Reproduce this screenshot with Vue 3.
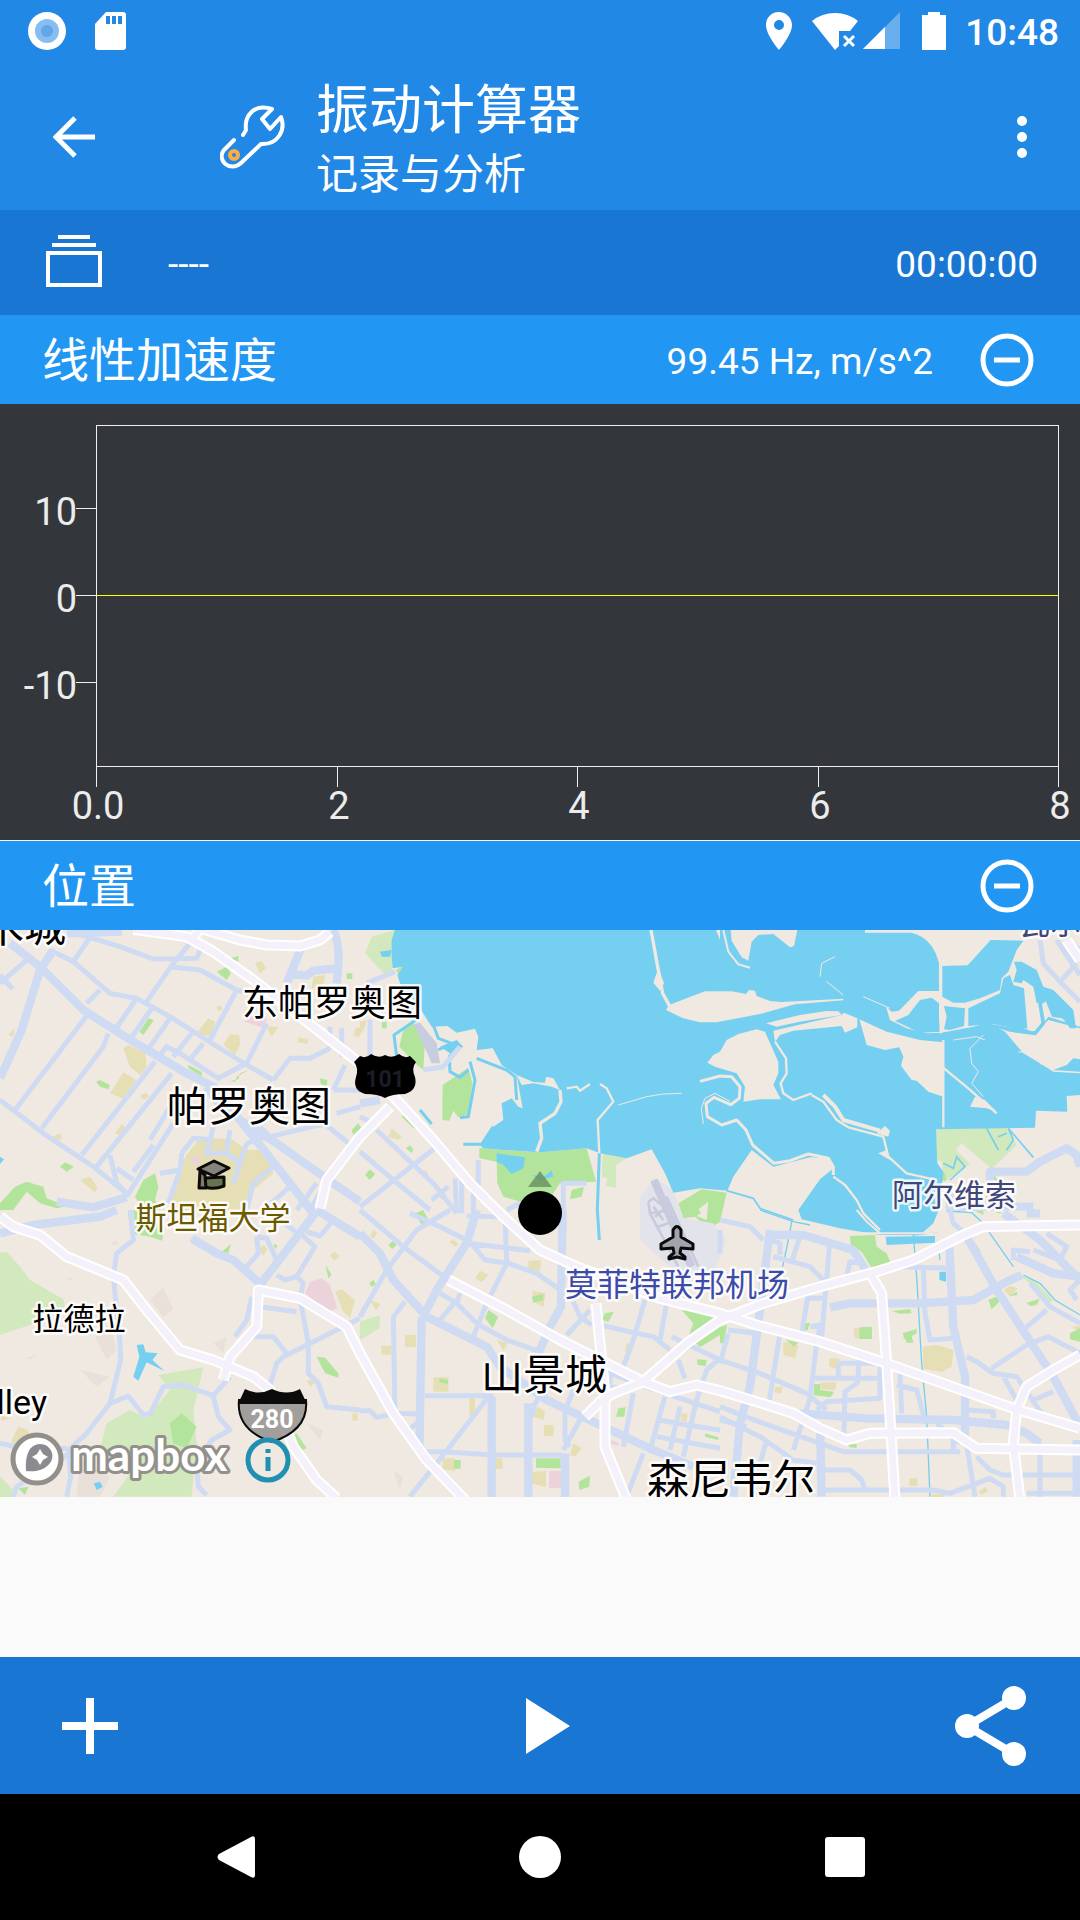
<script setup>
import { ref } from 'vue'

const experiment = ref('----')
const elapsed = ref('00:00:00')

const yTicks = [
  { y: 104, label: '10' },
  { y: 191, label: '0' },
  { y: 278, label: '-10' }
]
const xTicks = [
  { x: 96, label: '0.0' },
  { x: 337, label: '2' },
  { x: 577, label: '4' },
  { x: 818, label: '6' },
  { x: 1058, label: '8' }
]

const places = [
  { name: '东帕罗奥图', x: 332, y: 86, size: 36, kind: 'town' },
  { name: '帕罗奥图', x: 249, y: 191, size: 41, kind: 'town' },
  { name: '斯坦福大学', x: 213, y: 299, size: 31, kind: 'campus' },
  { name: '拉德拉', x: 79, y: 400, size: 31, kind: 'town' },
  { name: '山景城', x: 544, y: 460, size: 42, kind: 'town' },
  { name: '森尼韦尔', x: 731, y: 565, size: 42, kind: 'town' },
  { name: '莫菲特联邦机场', x: 677, y: 366, size: 32, kind: 'airport' },
  { name: '阿尔维索', x: 954, y: 276, size: 31, kind: 'suburb' }
]

// Map geometry uses three units per pixel, split in six tiles.
const tiles = [
  {
    at: 'translate(0 0)',
    sand: 'M515 850L535 740L600 650L700 660L740 690L800 690L820 760L760 810L740 880H520ZM370 385L385 375L435 400L440 440L420 465L390 440ZM330 520L370 457L410 480L370 537ZM590 340L625 295L645 305L635 350ZM670 375L690 342L718 345L720 375L705 405ZM765 130L785 122L798 145L780 160ZM940 170L975 165L970 200L935 205ZM800 320L835 320L815 350ZM895 352L925 358L922 372L893 366ZM240 780L270 770L292 800L285 818ZM345 640L365 612L378 625L355 645ZM160 650L180 640L187 655L170 662ZM420 528L435 518L447 528L432 540ZM650 262L660 255L668 268L655 274ZM1065 325L1080 322V350L1062 348ZM25 345L45 325L40 350Z',
    green: 'M650 155L680 140L693 160L680 180ZM690 115L715 108L715 125ZM418 335L445 295L462 300L430 345ZM288 485L300 480L330 495L325 508L300 500ZM180 740L195 727L222 740L200 755ZM0 850L45 800L80 785L130 800L140 835L200 858L170 865L120 850L80 815L40 870H0ZM405 830L430 780L465 760L475 800L465 840L480 870H430ZM565 435L605 455V470L565 445ZM1055 630L1075 610L1085 625L1060 645ZM1040 160H1057V177H1040ZM960 475L982 480L980 500L962 492ZM690 483L715 478L720 460L745 450L710 470L705 485ZM785 85L880 88L870 94L785 90Z',
    pink: 'M740 290L790 275L800 300L785 322L735 305ZM575 715L600 708L600 730L575 735Z',
    minor: 'M230 40L360 80L460 117L590 115L600 90M570 70L520 130L440 245M510 140L600 150L710 210L630 360M150 90L220 125L330 220L410 235L510 290L620 360L740 435L820 480M220 125L275 45M260 250L300 210M410 235L345 330M455 265L395 352M510 295L445 387M262 285L45 570M325 340L310 380L125 625M465 425L245 705M515 460L290 740M0 540L130 640L280 740L385 825M800 310L740 430L655 475L540 400L500 380L480 405M610 370L565 425M575 340L520 410M820 480L870 415L930 415L990 385M0 190L80 120M0 165L38 207M520 545L450 660M460 675L400 755M330 705L350 790L380 820M350 745L400 780M520 610L380 830M710 210L730 215M990 320V385M1025 325V410M780 620L810 650L980 610M960 600L1065 685M1000 510H1080M1000 510L1035 435M1010 580L1080 560M545 700L580 655L640 660M640 620L620 700L680 700L720 730M690 630L680 690M545 700L540 750L480 760M540 750L505 850M740 670L700 790M740 670L800 650M820 740L760 790L740 870M790 870L870 800M890 870L950 790M930 870L970 800',
    major: 'M30 70L120 140L250 270L400 365L560 460L640 500L720 600L870 790L940 880M160 90L120 150L65 330L0 475M1000 30Q1025 80 1010 190M905 80L860 190M870 162L920 167L940 152L1010 145M170 845L280 862L380 832M720 600L830 670L1000 790L1080 845M200 40L365 35M620 500L690 600'
  },
  {
    at: 'translate(1080 0)',
    sand: 'M0 305L20 300L15 320L0 345ZM85 650L95 625L125 650L115 660ZM185 760L197 750L205 762L193 770Z',
    green: 'M130 330L160 312L195 360L190 450L165 430L118 380ZM248 495L325 443L337 490L325 583L295 592L280 572L268 602L247 600ZM125 590L140 580L180 625L160 625ZM138 685L150 676L160 688L155 700ZM15 765L30 748L45 762L30 780ZM240 828L255 820L260 830L245 838ZM107 150L130 138L130 150L115 162ZM66 305H80V325H66ZM358 683L420 690L540 697L680 685L708 785L600 790L560 850L480 845L430 830L412 790L410 725L358 715ZM635 810L672 800L665 830L630 838ZM955 850L1025 808L1100 818L1080 905L1047 927L1005 890L970 895Z',
    pale: 'M35 50L105 30L95 160L70 160L15 100ZM728 700L800 715L768 735V803L738 798L742 775L725 770Z',
    minor: 'M30 300V410M20 190L105 155M190 450L250 440L300 380M50 630L220 790L290 880M0 695L100 780L210 870M230 680L0 860M0 590L30 605M355 720V800M285 775L290 880M305 770V880M340 780V880M610 880V790H680M265 800L215 840M440 870L480 850',
    major: 'M0 550L60 540'
  },
  {
    at: 'translate(2160 0)',
    green: 'M620 770L650 752L672 755L680 782L650 782ZM822 765L838 785H822ZM820 870L850 880H835Z',
    pale: 'M646 628L860 622L890 675L815 747L725 670L708 690L750 732L672 785L665 722L652 722Z',
    sand: 'M790 835L805 825V845H790Z',
    minor: 'M960 60L970 130L1020 185L1080 245M1010 60L1080 165M1020 185L1070 130M1040 60L1080 90',
    major: 'M810 800V755L920 755L960 725L1040 685L1070 705L1080 740M690 860H940M690 870L690 820'
  },
  {
    at: 'translate(0 870)',
    pale: 'M0 128L20 125L60 170L90 210L190 268L195 290L90 345L0 375ZM475 495L610 472L580 600L590 700L575 860H340L390 790L300 720L320 640L390 600L440 625L510 540ZM0 800L40 840V862H0Z',
    green: 'M400 0H420L490 50L487 92L450 80L405 72ZM510 640L545 610L590 650L560 715L520 700ZM665 125L693 102L685 130ZM820 100L833 108L825 118ZM977 165L995 195L985 205ZM950 440L975 443L1015 490L1015 503L975 490ZM870 685L890 670L920 715L900 722ZM55 835L85 830L75 855Z',
    pink: 'M915 250L930 215L965 205L990 225L1012 295L985 305Z',
    sand: 'M778 115L790 105L803 118L790 138ZM990 135L1003 125L1018 138L1003 152ZM1005 245L1025 238L1065 270L1050 325L1030 305ZM920 510L935 510L943 520L930 530ZM1057 610H1073V632H1057ZM35 690L55 650L85 660L90 690L60 720L38 715ZM0 615L30 625L5 632Z',
    minor: 'M390 0L400 90L350 130L340 200L360 400L362 450L330 580L260 670L205 720L212 800L200 860M330 580L385 558L430 615L450 612L490 530L550 525L640 557L690 500M640 560L655 620L690 660L635 690L590 760L595 830L620 855M0 700L100 720L200 715M210 730L50 830L40 860M770 80L775 130L740 170M770 80L800 85L830 150M705 380L740 330L755 260M780 290L890 305M900 265L925 400L925 490L955 520L980 590L1080 600M1080 325L940 395L850 440L830 460L810 525M760 380L820 380L860 430M1000 30L960 78L920 65M900 70L945 110L890 200L855 210L830 195M890 200L910 220L900 265M840 30L900 75',
    major: 'M0 70L100 45L300 20L350 0M575 85L650 130L700 150L785 225M945 10L780 225M950 0L1080 80'
  },
  {
    at: 'translate(1080 870)',
    pale: 'M0 335L60 315L58 355L0 390Z',
    green: 'M165 10L190 0L210 40L190 55ZM85 105L98 93L110 105L97 117ZM28 220L40 210L48 222L35 230ZM375 325L385 300L415 320L398 355ZM515 260L550 252L550 270L520 278ZM735 310L762 305L745 335L725 330ZM528 745H602V775L528 773ZM282 750H302V776H282ZM656 815L690 797L688 830L658 840ZM775 595L797 592L793 620L768 620ZM1012 448L1040 450L1037 468L1012 464ZM1035 670L1075 682V690L1035 680ZM965 300L1080 320V375L1020 412L985 380L1000 340ZM238 505L264 510V522L238 517Z',
    sand: 'M135 375H168V411H135ZM64 407H94V434H64ZM220 502H265V545H220ZM505 152L543 150L540 184L505 180ZM345 205L360 182L385 195L365 217ZM518 243L557 250L550 290L520 275ZM410 390L443 400L430 422ZM552 645H581V678H552ZM520 620L535 590L555 605L550 630ZM630 735L640 700L665 715L645 740ZM515 785L558 783V832L515 820ZM248 745H285V782L248 778ZM405 745H428V777H405ZM328 565H345V615H328ZM30 270L62 282L48 300ZM795 425L800 400L812 402L807 427ZM962 610L983 612L980 635L962 632ZM30 80L40 60L52 68L42 85ZM268 95L280 88L295 103L285 110Z',
    pink: 'M567 783H603V834H567ZM755 690L778 700L772 708L752 700Z',
    minor: 'M0 0L130 110L265 210M270 0L170 60L80 180L0 320M150 10L240 50L330 95L375 150L445 160L530 190L595 235M320 100L510 122M320 18L420 20M435 20L440 160L380 280L340 380M240 250L290 280L300 250M280 270L350 340L440 390L540 425M290 270L240 330M135 275L100 320L105 610L170 612M105 610L50 622L30 602L0 602M195 557H400M385 560L250 735L150 860M190 725L250 725L400 735H605M525 590L505 640M615 590V690L630 710M665 620L610 720M640 275L660 320L695 345M690 300L620 375M720 345L830 370L880 380L930 420M855 270L820 390L790 470M920 280L900 390M935 380L1080 450M955 450L975 505M1080 445L1040 480L1010 570L970 740M915 560L870 720M960 590L930 720M900 630L980 645L1080 660M890 680L1080 715M750 490L900 545L1080 605M820 550L790 710M850 730L800 860M170 640L140 665M750 480L750 530L790 535M560 520L520 590M640 540L620 590',
    major: 'M0 70L60 130L100 210L200 320L380 410L420 470L560 570L720 645L880 720L1000 770M350 0L320 100L230 240L195 310M185 320L178 730M395 560V862M505 580V862M615 730V862M608 0L603 290L570 350L535 430'
  },
  {
    at: 'translate(2160 870)',
    green: 'M390 78L465 75L470 110L500 130L512 158L455 175L425 125L392 105ZM0 350L22 345L10 400H0ZM418 352L456 350V387H418ZM548 370L590 357V370L575 378L580 398L560 398ZM515 303L570 297L575 310L540 311ZM255 340L270 338L262 362L254 360ZM195 388L235 398L222 410ZM282 522L300 522L300 540L342 545L332 562L282 556ZM380 702H410V714L390 712ZM763 95L785 128L770 115ZM805 270L835 257L838 275L815 298ZM920 278L960 266L950 285L930 288ZM868 258L890 245L893 255ZM1050 370L1080 355V395L1050 388ZM760 0H790V15Z',
    pale: 'M900 195L940 210L1000 270L985 280L940 230Z',
    sand: 'M608 410L650 404L700 420L695 470L665 486L610 476ZM190 395L235 405L225 445L190 435ZM328 445H357V480L328 470ZM400 355H420V385H405ZM300 518L350 515L345 540L302 538ZM165 530L188 530L183 552L163 545ZM568 805H592V828H568ZM775 845L795 832L805 842L785 855ZM852 240L870 228L893 235L870 260ZM550 368L570 372L560 390L550 385ZM1055 350L1080 348V365ZM635 852H680L670 862H635Z',
    minor: 'M0 30L90 50L130 90M155 90L180 100L180 135M160 140L270 170L315 215M240 80L215 155M328 110L318 230L305 380M265 250L245 370M265 265H310M380 200L390 155L430 160M610 170L615 310L630 390L705 385M540 170L690 175M980 300L915 355M930 220L990 290L1080 340M1080 430L985 380L920 405L815 475M740 440L770 455L820 490L890 500L965 610M850 500L890 570M1000 545L940 570M180 370L145 590M290 400L270 565L220 720M0 450L120 490L260 550L320 600M285 505H475M355 460H480M355 460V505M415 450V510L410 520L375 545L372 670M480 470V565L320 575L290 600M540 490L545 610M530 525L590 540L612 620M0 590L130 640L300 700L370 725H720M0 620L120 680L220 750L290 760M740 705L765 860M770 740L810 780L850 795H1080M960 700V860M300 840H640L690 850L810 805L850 830V860M310 780L390 780L425 810L435 840M25 360L110 370M25 370L0 460M980 70L1040 110L1020 150L940 120M1080 210L1050 240L1070 270M880 150V120L930 125M0 60V130M270 350L300 345L295 380M740 600L820 605V625M700 660V720M650 640L720 700M920 850H1080M140 690L100 830M80 650L0 630M690 0L700 40L740 75',
    major: 'M140 75L250 75L400 120L440 185M150 60L120 300L90 530L60 640L40 860M330 292L390 280L600 280L760 270L860 215L905 195M688 110L700 350L735 500L735 680M740 80L830 240L1000 500L1080 650M850 10L960 90L1080 210M890 140L1000 190L1080 200M240 610L440 625L700 630L860 645L920 670L960 700M300 640L305 860M1070 690V860M920 10H960'
  }
]
</script>

<template>
  <div class="screen">
    <header>
      <div class="status">
        <svg class="status-left" width="94" height="40" viewBox="0 0 94 40">
          <circle cx="19" cy="19" r="19" fill="#fff" />
          <circle cx="19" cy="19" r="12" fill="#87bdf0" />
          <circle cx="19" cy="19" r="6" fill="#60a8ea" />
          <path d="M78 0H95Q98 0 98 3V35Q98 38 95 38H70Q67 38 67 35V12Z" fill="#fff" />
          <path d="M78 4h4v8h-4zM84 4h4v8h-4zM90 4h4v8h-4z" fill="#2288e5" />
        </svg>
        <div class="status-right">
          <svg width="182" height="40" viewBox="0 0 182 40" fill="#fff">
            <path fill-rule="evenodd" d="M14 0C6 0 1 6 1 13C1 23 14 38 14 38S27 23 27 13C27 6 21 0 14 0ZM14 8a5 5 0 1 1 0 10a5 5 0 0 1 0-10Z" />
            <path d="M47 9Q57 1 70 1Q83 1 93 9L85 19H74V34L70 38Z" />
            <path d="M79 24L89 34M89 24L79 34" stroke="#fff" stroke-width="3" />
            <path d="M135 0V37H98Z" fill-opacity=".32" />
            <path d="M120 15V37H98Z" />
            <path d="M157 3H163V0H175V3H181V38H157Z" />
          </svg>
          <span class="clock">10:48</span>
        </div>
      </div>
      <div class="toolbar">
        <button class="back" aria-label="返回">
          <svg width="42" height="42" viewBox="0 0 42 42" fill="none" stroke="#fff" stroke-width="5">
            <path d="M22 2L3 21L22 40M3 21H42" />
          </svg>
        </button>
        <svg class="wrench" width="66" height="66" viewBox="0 0 66 66" fill="none" stroke="#fff" stroke-width="4" stroke-linecap="round" stroke-linejoin="round">
          <path d="M23 31L26 26C24 12 34 -1 52 5L42 15L50 25L61 13C66 26 58 41 41 40L21 59C10 69 -4 56 4 46L14 36" />
          <circle cx="14" cy="51" r="4" stroke="#ffab40" />
        </svg>
        <div class="titles">
          <h1>振动计算器</h1>
          <p>记录与分析</p>
        </div>
        <button class="more" aria-label="更多选项">
          <svg width="12" height="44" viewBox="0 0 12 44" fill="#fff">
            <circle cx="6" cy="6" r="5" /><circle cx="6" cy="22" r="5" /><circle cx="6" cy="38" r="5" />
          </svg>
        </button>
      </div>
    </header>

    <div class="session">
      <svg width="56" height="56" viewBox="0 0 56 56" fill="none" stroke="#fff" stroke-width="4">
        <path d="M12 2H44M6 10H50M2 18H54V50H2Z" />
      </svg>
      <span class="name">{{ experiment }}</span>
      <time>{{ elapsed }}</time>
    </div>

    <section>
      <div class="bar">
        <h2>线性加速度</h2>
        <span class="rate">99.45 Hz, m/s^2</span>
        <button class="fold" aria-label="折叠线性加速度">
          <svg width="54" height="54" viewBox="0 0 54 54" fill="none" stroke="#fff" stroke-width="5">
            <circle cx="27" cy="27" r="24" /><path d="M14 27H40" />
          </svg>
        </button>
      </div>
      <svg class="chart" viewBox="0 0 1080 436">
        <g class="axis">
          <rect x="96.5" y="21.5" width="962" height="341" />
          <path v-for="t in yTicks" :key="t.label" :d="`M76 ${t.y + 0.5}H96`" />
          <path v-for="t in xTicks" :key="t.label" :d="`M${t.x + 0.5} 362V383`" />
        </g>
        <path class="trace" d="M97 191.5H1058" />
        <text v-for="t in yTicks" :key="t.label" x="77" :y="t.y + 17" text-anchor="end">{{ t.label }}</text>
        <text v-for="t in xTicks" :key="t.label" :x="t.x + 2" y="415" text-anchor="middle">{{ t.label }}</text>
      </svg>
    </section>

    <section>
      <div class="bar">
        <h2>位置</h2>
        <button class="fold" aria-label="折叠位置">
          <svg width="54" height="54" viewBox="0 0 54 54" fill="none" stroke="#fff" stroke-width="5">
            <circle cx="27" cy="27" r="24" /><path d="M14 27H40" />
          </svg>
        </button>
      </div>
      <div class="map">
        <svg viewBox="0 0 1080 567">
          <g transform="translate(0 -10) scale(.333333)">
            <rect width="3240" height="1740" fill="#f0e9e1" />
            <g fill="#e8e0d9" transform="translate(0 870)">
              <path d="M330 105L345 90L358 103ZM285 380L330 340L350 420L320 450ZM240 480L330 500L290 530ZM70 445L110 435L95 447ZM200 210L215 200L218 212ZM450 270L490 230L520 300L490 320ZM240 740L330 800L300 860H230ZM920 640L970 660L960 690ZM1180 780L1210 800L1200 840ZM640 400L680 380L670 430ZM530 720L580 750L520 760Z" />
            </g>

            <g v-for="t in tiles" :key="t.at" :transform="t.at">
              <path v-if="t.pale" :d="t.pale" fill="#d2e8bd" />
              <path v-if="t.sand" :d="t.sand" fill="#e6deb5" />
              <path v-if="t.green" :d="t.green" fill="#b3e49b" />
              <path v-if="t.pink" :d="t.pink" fill="#ecd2da" />
            </g>
            <path d="M2095 868L2125 845L2122 875L2120 900L2090 888L2103 878Z" fill="#f0e9e1" />
            <path d="M1920 830L1965 775L2020 810L2050 895L2140 910L2180 960L2150 1040L2080 1110L1975 1010L1920 960Z" fill="#e3e4eb" />
            <path d="M1240 312L1260 308L1310 370L1320 430L1295 430L1280 395Z" fill="#c9cce0" />

            <g transform="translate(1080 0)">
              <path fill="#75cff1" d="M105 30L95 60V110L98 145L130 140L112 165L120 190L180 265L215 320L262 318L290 338L345 326L355 350L350 390L398 385L425 435L470 465L488 565L475 560L455 535L425 550L430 600L400 620L360 675L370 685L430 690L540 697L680 685L720 700L800 715L875 688L915 760L940 818L1020 805L1102 812L1120 770L1175 690L1240 740L1350 712L1410 715L1420 745L1380 778L1315 870L1325 898L1440 925L1560 945L1680 945L1720 910L1740 860L1750 755L1732 730L1728 628L2025 623L2028 572L2122 575L2120 528L2160 525V30Z" />
              <path fill="#f0e9e1" d="M895 145L880 188L900 212L912 190ZM927 255L1035 214H1115L1158 222L1167 210L1185 212L1190 228L1230 243L1265 246L1450 236V241L1305 253L1200 282L1070 307H1020L970 295L918 270ZM470 465L520 486L555 488L558 470L580 475L600 510L575 500L520 490L485 495ZM358 392L398 385L425 438L375 415ZM1042 428L1060 405L1080 395L1100 360L1135 342L1190 328L1215 335L1255 425V460L1240 495L1263 538L1200 538L1150 545L1155 500L1130 460L1065 440ZM1068 30H1080V60Z" />
              <g transform="translate(1080 0)">
                <path fill="#f0e9e1" d="M32 30L35 62L65 112L85 122L95 65L115 45L160 42L210 82L222 78L232 30ZM435 30V38H575Q640 55 657 130V213H595L537 272L515 275L498 260L510 300L560 325L620 340L665 338L760 320L800 310L860 320L920 328L940 340L985 300L1080 325V30ZM418 298L500 335L600 360L670 367V530L625 515L590 482L575 480L543 437L550 410L538 382L495 390L440 375L430 340ZM835 325L870 335L945 345L985 290L1080 320V460L1000 455L960 430L910 400L855 335ZM138 310L240 285L320 273L355 274L365 285L240 305L170 320ZM160 332L365 285L372 278L412 295V322L375 338L365 318L220 332L180 345L165 365ZM475 700L500 690L510 720ZM470 640L495 618L510 632L505 650ZM750 560L765 530L795 540L830 575L800 565Z" />
                <path fill="#75cff1" d="M525 303L565 285L600 240L635 233L657 250V300L665 335L600 338ZM667 138L743 136L812 60L910 62L890 90L865 155L845 175L840 210L780 235L735 248H700L667 230ZM672 258L735 265L732 318L690 330L672 328L680 290ZM745 265L840 220L850 175L870 165L880 195L912 205L922 325L900 328L820 312L745 318ZM882 125L905 125L950 150L970 200L1000 210L1060 270L1068 325H1050L1030 290L1000 285L985 235L950 250L940 200L910 180L905 190L880 185L890 150ZM1000 450L1040 435L1060 415L1080 418V455Z" />
                <g fill="none" stroke="#f0e9e1" stroke-width="7" stroke-linejoin="round">
                  <path d="M10 30L25 95L55 133L90 143" stroke-width="6" />
                  <path d="M165 365L198 415L200 460L182 490L190 520L220 540L275 520M275 525L310 545L350 600L385 622L490 650L505 710L560 760L640 778M340 770L375 795L410 840L430 880L480 930M670 360V622M672 445L745 505L830 580M662 215V340M740 262V320" />
                  <path d="M310 525L345 560L370 600L480 632" stroke-width="12" />
                  <path d="M790 345L750 385L755 430L775 455L755 490L790 530M700 360L770 350L795 360M895 395L940 400L965 435M320 185L370 225M430 230L510 265M300 170L305 130L345 110" stroke-width="3" />
                </g>
                <path d="M875 330L945 340L970 310L960 250L980 235L1000 285L1030 290L1055 320" fill="none" stroke="#75cff1" stroke-width="11" />
                <path d="M800 625L835 690M835 650L860 640M860 690L880 660L865 625L940 712M670 730L700 745L710 710L735 740L690 780M20 812L100 835L120 865L220 900" fill="none" stroke="#75cff1" stroke-width="5" />
              </g>
              <g fill="none" stroke="#f0e9e1" stroke-width="7">
                <path d="M873 30L893 140L908 220L930 260M600 510L603 545L585 580L540 610L545 655L530 695M465 490L480 560" stroke-width="10" />
                <path d="M720 492L740 505L760 545L713 600L718 700M620 505L650 500L660 512L690 492" />
                <path d="M775 555L860 530L910 522L965 520" stroke-width="3" />
                <path d="M1020 484L1080 468L1115 470L1140 500L1138 535L1112 554L1062 532L1038 550L1042 590L1085 615L1130 600L1158 630L1178 675L1242 730L1290 722L1345 702L1405 715L1420 740V765" stroke-width="9" stroke-linejoin="round" />
              </g>
              <path d="M1030 612L1024 565L1035 535L1065 520L1110 544" fill="none" stroke="#f0e9e1" stroke-width="3" />
              <g fill="none" stroke="#75cff1" stroke-width="9">
                <path d="M218 310L235 355L275 370L235 390M300 375L268 410L270 455L300 472L325 450M350 415L440 450L465 470L470 540M330 425L345 480L325 590L300 593M180 292L102 345L110 410M310 673H365L400 620M718 700L712 870L718 960M180 570L215 612" />
              </g>
              <path fill="#75cff1" d="M410 700L495 712L490 745L455 762L430 735L410 725ZM515 765L550 770L575 752L580 770L540 780ZM60 95L95 90L90 110H65ZM240 380L290 360L310 380L270 400Z" />
            </g>
            <path fill="#75cff1" d="M410 1275L430 1273L437 1297L473 1300L457 1320L493 1353L440 1327L415 1382L400 1370L418 1310ZM282 1690L300 1685L308 1700L290 1710ZM0 710L12 718L0 732ZM2657 950L2805 948V968L2660 975ZM2818 1055H2838V1085L2818 1080Z" />
            <g fill="none" stroke="#75cff1" stroke-width="4" transform="translate(2160 870)">
              <path d="M580 75L590 200L605 460L620 620L630 860M680 3L755 8L785 35L880 170M910 195L960 220L1005 270L1080 315M120 0L220 35L270 45M215 35L205 90L188 170M580 75L650 68L660 150" />
            </g>
            <path d="M2570 870L2600 905L2640 940M2560 940H2810L2812 965" fill="none" stroke="#f0e9e1" stroke-width="6" />

            <g stroke="#c8cbdd" fill="none">
              <path d="M1962 780L2075 1040" stroke-width="24" />
              <path d="M1945 845L1960 835L1985 855M1945 845L1950 880L2035 1040M1985 830L2000 860L1965 890M1960 860L1990 900M2000 830L2095 1040M1950 880L2010 870M1975 920L2030 900" stroke-width="8" />
            </g>

            <g fill="none" stroke="#cedbf2" stroke-linejoin="round">
              <g v-for="t in tiles" :key="t.at" :transform="t.at">
                <path :d="t.minor" stroke-width="15" />
                <path :d="t.major" stroke-width="25" />
              </g>
            </g>

            <g fill="none" stroke-linejoin="round">
              <g v-for="layer in [{ c: '#fff', w: 33 }, { c: '#f5f1fb', w: 21 }]" :key="layer.w" :stroke="layer.c" :stroke-width="layer.w">
                <path d="M400 28L560 50L640 95L760 180L1080 430L1190 540L1300 660L1410 790L1510 890L1620 990L1730 1040L1980 1135L2160 1180L2270 1215L2460 1265L2660 1330L3040 1465L3240 1525" />
                <path d="M575 60L600 25L720 60L800 75L900 78L960 60L990 35M1170 560L1080 650L980 780L960 865" />
                <path d="M0 890L40 920L120 945L200 1010L370 1080L440 1170L540 1290L640 1320L760 1370L810 1410L880 1580L950 1680L1010 1735" />
                <path d="M670 1380L690 1310L770 1220L775 1110L900 1135L1040 1220L1080 1300L1180 1480L1280 1620L1395 1740" />
                <path d="M1345 1080L1520 1170L1680 1260L1930 1385L2010 1415L2090 1395L2160 1412L2270 1445L2380 1480L2460 1525L2540 1560L2610 1540L2860 1538L2930 1585L3240 1590" />
                <path d="M1755 1490L1800 1445L1840 1420L1930 1385L2060 1270L2160 1200L2290 1150L2460 1100L2630 1055L2740 1020L2890 945L2950 920L3240 915" />
                <path d="M1788 1150L1800 1270L1815 1420V1580L1880 1740M2610 1060L2645 1120L2660 1330L2675 1570L2685 1740M3240 1305L3160 1350L3080 1400L3050 1470L3040 1570L3060 1740" />
                <path d="M3200 60L3240 120" />
              </g>
            </g>
          </g>

          <g class="labels">
            <text v-for="p in places" :key="p.name" :class="p.kind" :x="p.x" :y="p.y" :font-size="p.size" text-anchor="middle">{{ p.name }}</text>
            <text class="town" x="66" y="12" font-size="42" text-anchor="end">红木城</text>
            <text class="suburb" x="1019" y="4" font-size="31">瓦尔姆</text>
            <text class="town latin" x="47" y="484" font-size="34" text-anchor="end">Portola Valley</text>
          </g>

          <path d="M360 126Q366 129 371 124Q379 129 385 125Q392 129 399 124Q405 129 410 126L416 132Q411 138 415 147Q418 160 405 164Q392 164 385 168Q378 164 365 164Q352 160 356 147Q359 138 354 132Z" />
          <text class="shield" x="385" y="157" font-size="23" fill="#1c1d29" text-anchor="middle">101</text>

          <path d="M239 470Q236 500 272 512Q309 500 306 470Z" fill="#8e8b89" fill-opacity=".8" stroke="#0b0b0b" stroke-width="2" />
          <path d="M245 459Q258 466 272 459Q287 466 300 459L307 474H238Z" fill="#0b0b0b" />
          <text class="shield" x="272" y="498" font-size="25" fill="#fff" text-anchor="middle">280</text>

          <g stroke="#0a0a0a" stroke-width="3" stroke-linejoin="round">
            <path d="M205 248V257Q214 260 224 256V247Z" fill="#66744f" />
            <path d="M198 239L214 231L229 238L214 246Z" fill="#85847c" />
            <path d="M200 241L205 245L206 258H199Z" fill="#827a5c" />
            <path d="M673 300Q677 293 681 300V307L693 314V319L681 318L680 323L685 327V329L677 327L669 329V327L674 323L673 318L661 319V314L673 307Z" fill="#a2a3ad" />
          </g>

          <path d="M540 241L552 257H528Z" fill="#5e8253" fill-opacity=".7" />
          <circle cx="540" cy="283" r="22" />

          <g class="brand">
            <circle cx="37" cy="529" r="24" fill="#fff" stroke="#93908c" stroke-width="5" />
            <path d="M26 541C25 528 28 514 40 514C50 514 56 525 50 533C44 541 34 542 26 541Z" fill="#8a8a90" />
            <path d="M40 519L43 524L48 527L43 530L40 535L37 530L32 527L37 524Z" fill="#fff" />
            <text x="71" y="541" font-size="44">mapbox</text>
          </g>
        </svg>
        <button class="info" aria-label="地图信息">
          <svg width="46" height="46" viewBox="0 0 46 46" fill="none" stroke="#1f8fb2" stroke-width="5">
            <circle cx="23" cy="23" r="20" /><path d="M23 12V16M23 20V34" />
          </svg>
        </button>
      </div>
    </section>

    <main class="empty"></main>

    <footer class="actions">
      <button aria-label="添加">
        <svg width="56" height="56" viewBox="0 0 56 56" fill="#fff"><path d="M24 0H32V24H56V32H32V56H24V32H0V24H24Z" /></svg>
      </button>
      <button aria-label="开始">
        <svg width="66" height="56" viewBox="0 0 66 56" fill="#fff"><path d="M22 0L66 28L22 56Z" /></svg>
      </button>
      <button aria-label="分享">
        <svg width="72" height="80" viewBox="0 0 72 80" fill="#fff">
          <path d="M59 12L12 40L59 68" fill="none" stroke="#fff" stroke-width="8" />
          <circle cx="59" cy="12" r="12" /><circle cx="12" cy="40" r="12" /><circle cx="59" cy="68" r="12" />
        </svg>
      </button>
    </footer>
    <nav>
      <button aria-label="后退"><svg width="38" height="42" viewBox="0 0 38 42" fill="#fff"><path d="M34 1Q38 -1 38 3V39Q38 43 34 41L2 24Q-1 21 2 18Z" /></svg></button>
      <button aria-label="主屏幕"><svg width="42" height="42" viewBox="0 0 42 42" fill="#fff"><circle cx="21" cy="21" r="21" /></svg></button>
      <button aria-label="最近任务"><svg width="40" height="40" viewBox="0 0 40 40" fill="#fff"><rect width="40" height="40" rx="3" /></svg></button>
    </nav>
  </div>
</template>

<style>
body {
  margin: 0;
}
</style>

<style scoped>
.screen {
  display: flex;
  flex-direction: column;
  min-height: 100vh;
  background: #fafafa;
  color: #fff;
  font-family: Roboto, "Noto Sans CJK SC", sans-serif;
  font-size: 37px;
}
svg {
  display: block;
  flex: none;
}
button {
  display: flex;
  align-items: center;
  justify-content: center;
  padding: 0;
  border: 0;
  background: none;
}
h1, h2, p {
  margin: 0;
  font-weight: 400;
}
header {
  background: #2288e5;
}
.status {
  display: flex;
  justify-content: space-between;
  height: 63px;
  padding: 12px 21px 0 28px;
  box-sizing: border-box;
}
.status-left {
  overflow: visible;
}
.status-right {
  display: flex;
  gap: 18px;
}
.clock {
  font-weight: 500;
  line-height: 42px;
}
.toolbar {
  display: flex;
  align-items: center;
  height: 147px;
}
.back {
  width: 148px;
  height: 147px;
}
.wrench {
  margin-left: 72px;
}
.titles {
  flex: 1;
  padding: 8px 0 0 30px;
}
h1 {
  font-size: 53px;
  line-height: 68px;
}
.titles p {
  font-size: 42px;
  line-height: 60px;
}
.more {
  width: 116px;
  height: 147px;
}
.session {
  display: flex;
  align-items: center;
  height: 105px;
  padding: 0 42px 0 46px;
  background: #1976d2;
}
.name,
time,
.rate,
h2 {
  padding-top: 3px;
}
.name {
  flex: 1;
  padding-left: 66px;
}
.bar {
  display: flex;
  align-items: center;
  height: 89px;
  padding: 0 46px 0 42px;
  background: #2196f3;
}
h2 {
  flex: 1;
  font-size: 47px;
  line-height: 70px;
}
.fold {
  margin-left: 47px;
}
.chart {
  width: 100%;
  border-bottom: 1px solid #f5f5f5;
  background: #33363b;
}
.axis {
  fill: none;
  stroke: #f0f0f0;
  shape-rendering: crispEdges;
}
.trace {
  stroke: #ffff00;
  shape-rendering: crispEdges;
}
.chart text {
  fill: #ececec;
  font-size: 38px;
}
.map {
  position: relative;
}
.map > svg {
  width: 100%;
}
.labels text {
  font-family: "Noto Sans CJK SC", sans-serif;
  paint-order: stroke;
  stroke: #fff;
  stroke-opacity: 0.85;
  stroke-width: 5px;
  stroke-linejoin: round;
}
.labels .latin {
  font-family: Roboto, sans-serif;
}
.labels .campus {
  fill: #6b5900;
}
.labels .airport {
  fill: #3c4ba8;
}
.labels .suburb {
  fill: #404678;
}
.shield {
  font-weight: 700;
}
.brand text {
  font-family: Lato, sans-serif;
  font-weight: 700;
  fill: #fff;
  stroke: #93908c;
  stroke-width: 6px;
  stroke-linejoin: round;
  paint-order: stroke;
}
.info {
  position: absolute;
  bottom: 14px;
  left: 245px;
}
.empty {
  flex: 1;
  min-height: 64px;
}
.actions {
  display: flex;
  align-items: center;
  justify-content: space-between;
  height: 137px;
  padding: 0 53px 0 62px;
  background: #1976d2;
}
nav {
  display: flex;
  align-items: center;
  justify-content: center;
  gap: 264px;
  height: 126px;
  padding-left: 2px;
  background: #000;
}
</style>
